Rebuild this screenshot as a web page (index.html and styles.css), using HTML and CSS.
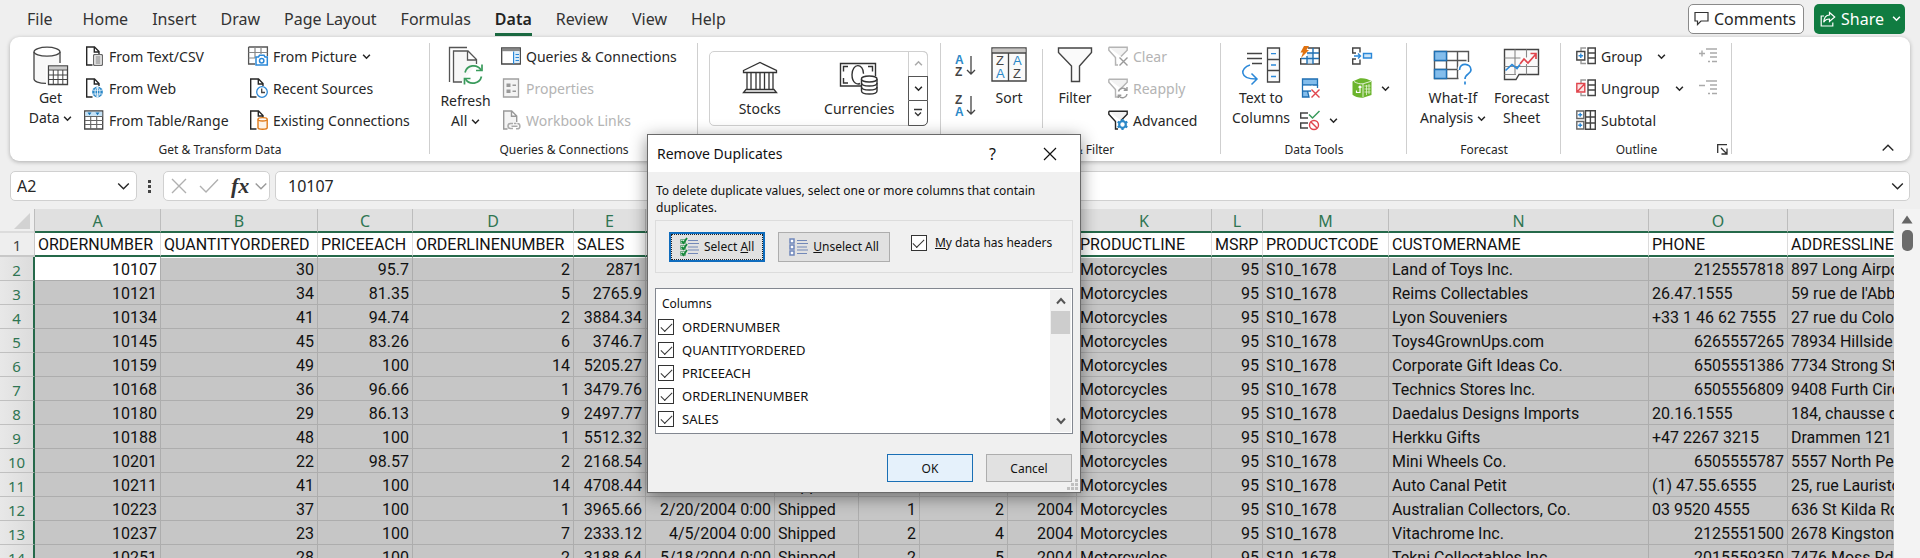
FILE: index.html
```html
<!DOCTYPE html>
<html lang="en">
<head>
<meta charset="utf-8">
<title>Remove Duplicates</title>
<link rel="stylesheet" href="styles.css">
</head>
<body>
<svg class="defs" aria-hidden="true">
  <symbol id="chev" viewBox="0 0 8 8"><path d="M1 2.5l3 3 3-3" fill="none" stroke="currentColor" stroke-width="1.4"/></symbol>
  <symbol id="chev-lg" viewBox="0 0 12 8"><path d="M.7 1.5L6 6.7l5.300-5.200" fill="none" stroke="currentColor" stroke-width="1.4"/></symbol>
  <symbol id="page" viewBox="0 0 20 20"><path d="M8.500 19H2.700V1h7.800l4.500 4.500V8M10.300 1v5H15" fill="none" stroke="currentColor" stroke-width="1.400"/></symbol>
  <symbol id="funnel" viewBox="0 0 20 20"><path d="M.8 1.200h18.400v3L13 10.500M.8 1.200v3l6.700 7.300V19H10" fill="#f2f2f2" stroke="currentColor" stroke-width="1.400"/></symbol>
</svg>

<header class="tabs">
  <nav class="tab-list">
    <a href="#file">File</a><a href="#home">Home</a><a href="#insert">Insert</a><a href="#draw">Draw</a><a href="#layout">Page Layout</a><a href="#formulas">Formulas</a><a href="#data" class="active">Data</a><a href="#review">Review</a><a href="#view">View</a><a href="#help">Help</a>
  </nav>
  <button class="comments"><svg width="15" height="15" viewBox="0 0 15 15"><path d="M1 1.500h13v8.500H7l-3.500 3.500V10H1z" fill="none" stroke="#333" stroke-width="1.200"/></svg>Comments</button>
  <button class="share"><svg width="16" height="16" viewBox="0 0 16 16" fill="none" stroke="#fff" stroke-width="1.200"><path d="M4 5H1.200v10h11.600v-3.500"/><path d="M9.500 1.500L14.700 6 9.500 10.500V8C6.500 8 5 9 3.700 11.200 4 7 6 4.200 9.500 4z"/></svg>Share<svg class="chev" width="9" height="9"><use href="#chev"/></svg></button>
</header>

<section class="ribbon">
  <div class="group g-get">
    <div class="body">
      <button class="big">
        <svg width="36" height="40" viewBox="0 0 36 40" fill="none" stroke="#444" stroke-width="1.300"><path d="M1.600 6v27c2 3 6 4 11.400 4V19h13V7z" fill="#f8f8f8" stroke="none"/><path d="M1 6v27c0 2.500 5 4.300 12 4.300M27 6v11" /><ellipse cx="14" cy="5.700" rx="13" ry="4.500" fill="#fff"/><path d="M15.500 20h19v18.500h-19z" fill="#fff"/><path d="M16 20.500h18v3H16z" fill="#ccc" stroke="none"/><path d="M15.500 24h19M15.500 29h19M15.500 33.500h19M20.300 24v14.500M25 24v14.500M29.800 24v14.500" stroke-width="1"/></svg>
        <span>Get</span><span>Data <svg class="chev" width="9" height="9"><use href="#chev"/></svg></span>
      </button>
      <div class="stack col-a">
        <button class="cmd"><svg width="20" height="20" viewBox="0 0 20 20"><use href="#page"/><path d="M9.700 8.700h8.600v10.600H9.700z" fill="#fff" stroke="#444"/><path d="M11.500 11h5M11.500 13h5M11.500 15h5M11.500 17h5" stroke="#666"/></svg>From Text/CSV</button>
        <button class="cmd"><svg width="20" height="20" viewBox="0 0 20 20"><use href="#page"/><circle cx="13.500" cy="14" r="5.400" fill="#2b88c8"/><path d="M8.500 12.200h10M8.500 16h10M13.500 8.700v10.600M13.500 8.700c-3.300 3.300-3.300 7.300 0 10.600 3.300-3.300 3.300-7.300 0-10.600" stroke="#fff" stroke-width=".8" fill="none"/></svg>From Web</button>
        <button class="cmd"><svg width="20" height="20" viewBox="0 0 20 20"><path d="M.7 1h18v18H.7z" fill="#fff" stroke="#444" stroke-width="1.300"/><path d="M1 6.500h18M1 10.500h18M1 14.500h18M6.700 6.500V19M12.700 6.500V19" stroke="#666" stroke-width="1.100"/><path d="M1.300 1.700h17v4.200h-17z" fill="#c5e2f6"/><path d="M3.500 2.500h4l-2 2.700zM11.500 2.500h4l-2 2.700z" fill="#1673b5"/></svg>From Table/Range</button>
      </div>
      <div class="stack">
        <button class="cmd"><svg width="20" height="20" viewBox="0 0 20 20"><path d="M.6 1h18.800v9M.6 1v17H7" fill="none" stroke="#555" stroke-width="1.300"/><path d="M.6 6.500h18.800M.6 12H7M7 1v11M13 1v7" stroke="#888" fill="none" stroke-width="1.200"/><path d="M8 11h2.500l1-1.700h4.500l1 1.700h2.300v8H8z" fill="#fff" stroke="#2b88d8" stroke-width="1.500"/><circle cx="13.700" cy="14.700" r="2.200" fill="#fff" stroke="#2b88d8" stroke-width="1.500"/></svg>From Picture<svg class="chev" width="9" height="9"><use href="#chev"/></svg></button>
        <button class="cmd"><svg width="20" height="20" viewBox="0 0 20 20"><use href="#page"/><circle cx="14" cy="14" r="5.300" fill="#fff" stroke="#2b88d8" stroke-width="1.300"/><path d="M13.700 10.500v4H17" stroke="#444" fill="none" stroke-width="1.300"/></svg>Recent Sources</button>
        <button class="cmd"><svg width="20" height="20" viewBox="0 0 20 20"><use href="#page"/><path d="M10 9.500v8.300c0 2 9.200 2 9.200 0V9.500" fill="#fdf3e7" stroke="#e07b1a" stroke-width="1.400"/><ellipse cx="14.600" cy="9.300" rx="4.600" ry="1.700" fill="#fff" stroke="#e07b1a" stroke-width="1.400"/></svg>Existing Connections</button>
      </div>
    </div>
    <div class="caption">Get &amp; Transform Data</div>
  </div>

  <div class="group g-query">
    <div class="body">
      <button class="big low">
        <svg width="36" height="40" viewBox="0 0 36 40" fill="none" stroke="#555" stroke-width="1.300"><path d="M1.500 36V1.500H19"/><path d="M14 36H5.500V5H20l8.500 8.500V18M19.500 5v9h9" fill="#f7f7f7"/><path d="M17 26.500a8.800 8.800 0 0 1 16-2.500M33.500 30.500a8.800 8.800 0 0 1-16 2.500" stroke="#3a9b5c" stroke-width="1.700"/><path d="M34 18.500v6h-6M16.500 38.500v-6h6" stroke="#3a9b5c" stroke-width="1.700"/></svg>
        <span>Refresh</span><span>All <svg class="chev" width="9" height="9"><use href="#chev"/></svg></span>
      </button>
      <div class="stack">
        <button class="cmd"><svg width="20" height="20" viewBox="0 0 20 20"><path d="M.7 2h18.600v16H.7z" fill="#fff" stroke="#444" stroke-width="1.300"/><path d="M1 2.500h18v2.700H1z" fill="#888"/><path d="M12.700 5.500V18" stroke="#2b88d8" stroke-width="1.400"/><path d="M13.500 5.500h5V17h-5z" fill="#d9ecfa"/><path d="M14.500 8.500h3.500M14.500 11.500h3.500M14.500 14.500h3.500" stroke="#2b88d8"/></svg>Queries &amp; Connections</button>
        <button class="cmd" disabled><svg width="20" height="20" viewBox="0 0 20 20"><path d="M2.500 1h15v18h-15z" fill="#f4f4f4" stroke="#a0a0a0" stroke-width="1.300"/><path d="M5.500 5.500h4v3.500h-4zM5.500 11.500h4V15h-4z" fill="#999"/><path d="M11.500 7.300h3.500M11.500 13.300h3.500" stroke="#999" stroke-width="1.500"/></svg>Properties</button>
        <button class="cmd" disabled><svg width="20" height="20" viewBox="0 0 20 20"><path d="M6.500 19H2.700V1h8l5 5v6M10.500 1v5.300h5" fill="#f4f4f4" stroke="#999" stroke-width="1.400"/><path d="M12 18.500H9.500a2.500 2.500 0 0 1 0-5H12M13 13.500h2.500M15 18.800h1.300a2.600 2.600 0 0 0 0-5.200M10.500 16.200h6" fill="none" stroke="#aaa" stroke-width="1.500"/></svg>Workbook Links</button>
      </div>
    </div>
    <div class="caption">Queries &amp; Connections</div>
  </div>

  <div class="group g-types">
    <div class="gallery">
      <button class="tile"><svg width="36" height="34" viewBox="0 0 36 34" fill="none" stroke="#333" stroke-width="1.300"><path d="M1.500 9.500L18 1.500l16.500 8v2h-33zM4 28.500h28l2.500 3h-33zM5 11.500v17M9 11.500v17M14 11.500v17M18 11.500v17M22.500 11.500v17M27 11.500v17M31 11.500v17"/></svg>Stocks</button>
      <button class="tile"><svg width="40" height="34" viewBox="0 0 40 34" fill="none" stroke="#333" stroke-width="1.400"><path d="M22 25H1.500V2.500h35V15"/><path d="M9 5.500H4.500v5M4.500 17v5H9M29 5.500h4.500v5"/><path d="M21 22.500c-2 1-8 .5-8-8.700 0-12 11.500-12 11.500-1"/><path d="M22.500 18v12c0 4 15.500 4 15.500 0V18" fill="#fff"/><ellipse cx="30.200" cy="18" rx="7.800" ry="3" fill="#fff"/><path d="M22.500 22c0 4 15.500 4 15.500 0M22.500 26c0 4 15.500 4 15.500 0"/></svg>Currencies</button>
      <div class="spin">
        <button class="dim" aria-label="Scroll up"><svg class="flip" width="9" height="9"><use href="#chev"/></svg></button>
        <button aria-label="Scroll down"><svg width="9" height="9"><use href="#chev"/></svg></button>
        <button aria-label="More"><svg width="10" height="10" viewBox="0 0 10 10" fill="none" stroke="#333" stroke-width="1.300"><path d="M1 1.500h8M2 4.500l3 3 3-3"/></svg></button>
      </div>
    </div>
  </div>

  <div class="group g-sort">
    <div class="body">
      <div class="sorts">
        <button aria-label="Sort A to Z"><svg width="22" height="24" viewBox="0 0 22 24"><text x="0" y="10" class="lt blue">A</text><text x="0" y="22" class="lt">Z</text><path d="M16 2v18M12 16l4 4 4-4" fill="none" stroke="#444" stroke-width="1.300"/></svg></button>
        <button aria-label="Sort Z to A"><svg width="22" height="24" viewBox="0 0 22 24"><text x="0" y="10" class="lt">Z</text><text x="0" y="22" class="lt blue">A</text><path d="M16 2v18M12 16l4 4 4-4" fill="none" stroke="#444" stroke-width="1.300"/></svg></button>
      </div>
      <button class="big sort">
        <svg width="36" height="40" viewBox="0 0 36 40"><path d="M1 2h34v33H1z" fill="#fafafa" stroke="#444" stroke-width="1.400"/><path d="M1.500 2.500h33v4h-33z" fill="#c8c6c4"/><path d="M1 7h34M17.500 7v28" stroke="#444" stroke-width="1.300"/><text x="5" y="19" class="lt thin">Z</text><text x="5" y="32" class="lt thin blue">A</text><text x="22" y="19" class="lt thin blue">A</text><text x="22" y="32" class="lt thin">Z</text></svg>
        <span>Sort</span>
      </button>
      <button class="big filter">
        <svg width="36" height="40" viewBox="0 0 36 40"><path d="M1.500 2h33v4.500L22.500 20v15.500h-8V20L1.500 6.500z" fill="#fafafa" stroke="#444" stroke-width="1.400"/></svg>
        <span>Filter</span>
      </button>
      <div class="stack">
        <button class="cmd" disabled><svg width="20" height="20" viewBox="0 0 20 20"><use href="#funnel"/><path d="M11.500 11.500l8 8M19.500 11.500l-8 8" stroke="#999" stroke-width="1.400"/></svg>Clear</button>
        <button class="cmd" disabled><svg width="20" height="20" viewBox="0 0 20 20"><use href="#funnel"/><path d="M10.500 13.500a4.500 4.500 0 0 1 8-1.500M19 16a4.500 4.500 0 0 1-8 2M19 9v3.300h-3.300M10.300 20v-2.700h3" fill="none" stroke="#999" stroke-width="1.400"/></svg>Reapply</button>
        <button class="cmd"><svg width="20" height="20" viewBox="0 0 20 20"><use href="#funnel"/><circle cx="14.500" cy="14.500" r="3.300" fill="#fff" stroke="#2b88c8" stroke-width="2.200"/><path d="M14.500 9v2M14.500 18v2M9.700 11.700l1.800 1M17.500 16.300l1.800 1M9.700 17.300l1.800-1M17.500 12.700l1.800-1" stroke="#2b88c8" stroke-width="2.200"/></svg>Advanced</button>
      </div>
    </div>
    <div class="caption">Sort &amp; Filter</div>
  </div>

  <div class="group g-tools">
    <div class="body">
      <button class="big">
        <svg width="40" height="40" viewBox="0 0 40 40" fill="none" stroke="#444" stroke-width="1.300"><path d="M6 7.500h15M6 12.500h15M11 17.500h10"/><path d="M9 19c-10 3-11 14 6 14M10.500 27.500l5.500 5.500-5.500 5.500" stroke="#2b88d8" stroke-width="1.500"/><path d="M26.500 2h12v34h-12zM26.500 13.500h12M26.500 24.500h12" fill="#fafafa"/><path d="M30 7.700h5M30 19h5M30 30.500h5" stroke="#2b88d8"/></svg>
        <span>Text to</span><span>Columns</span>
      </button>
      <div class="stack tools">
        <button class="cmd" aria-label="Flash Fill"><svg width="20" height="20" viewBox="0 0 20 20"><path d="M8 2h11.300v16H.7v-6" fill="#fff" stroke="#444" stroke-width="1.400"/><path d="M7 6.500h6v11H7z" fill="#cfe6f8"/><path d="M7 7h12M1 12.500h18M7 10v8M13 2v16" stroke="#1f6fb2" stroke-width="1.400"/><path d="M4 0h5L6.500 4H9L1 12l2-5.500H.5z" fill="#e0720f"/></svg></button>
        <button class="cmd" aria-label="Remove Duplicates"><svg width="20" height="20" viewBox="0 0 20 20"><path d="M2.500 1h15v6h-15zM2.500 7h8v6h-8zM2.500 13h5l1.500 6H2.500z" fill="#83bdec" stroke="#1f6fb2" stroke-width="1.300"/><path d="M3.200 7.700H13v4.600H3.200z" fill="#fff"/><path d="M17.500 7v3" stroke="#1f6fb2" stroke-width="1.300"/><path d="M11.500 11.500l8 8M19.500 11.500l-8 8" stroke="#e0454d" stroke-width="1.400"/></svg></button>
        <button class="cmd" aria-label="Data Validation"><svg width="20" height="20" viewBox="0 0 20 20" fill="none" stroke="#444" stroke-width="1.400"><path d="M8 3H.7v5H8M8 13H.7v5H8"/><path d="M9 4.500l3.500 3.500L19.500 1" stroke="#3a9b5c" stroke-width="1.500"/><circle cx="14" cy="15" r="4.500" stroke="#e0454d"/><path d="M11 12l6 6" stroke="#e0454d"/></svg><svg class="chev" width="9" height="9"><use href="#chev"/></svg></button>
      </div>
      <div class="stack">
        <button class="cmd" aria-label="Consolidate"><svg width="20" height="20" viewBox="0 0 20 20" fill="none" stroke="#444" stroke-width="1.400"><path d="M8 6.500V2H.7v5H4M8 13.500V18H.7v-5H4"/><path d="M2 10h6M6 7.500L8.500 10 6 12.500" stroke="#2b88d8"/><path d="M11.500 7.500h8v4.500h-8z" fill="#cfe6f8" stroke="#2b88d8"/></svg></button>
        <button class="cmd" aria-label="Data Model"><svg width="20" height="20" viewBox="0 0 20 20"><path d="M.5 3.500L8 .3c4-.5 8 .7 11.500 2.700v14L11 19.800c-4 .3-8-1-10.500-3z" fill="#6cb52d"/><path d="M2 3.500c3 2 6 2.500 9 2.300l8-2.500M11 6v13" stroke="#fff" stroke-width=".8" fill="none"/><path d="M12.500 8h6M12.500 11h6M12.500 14h6M14.500 7v10M17 6v10" stroke="#e3f4d3" stroke-width=".8"/><path d="M8 9v5.500H4.500v-2M6.500 9.500L8 8l1.500 1.500" stroke="#fff" fill="none" stroke-width="1.200"/></svg><svg class="chev" width="9" height="9"><use href="#chev"/></svg></button>
      </div>
    </div>
    <div class="caption">Data Tools</div>
  </div>

  <div class="group g-forecast">
    <div class="body">
      <button class="big">
        <svg width="40" height="40" viewBox="0 0 40 40" fill="none" stroke="#555" stroke-width="1.400"><path d="M1.500 5.500h34v27h-34z" fill="#fff" stroke="none"/><path d="M35.500 16V5.500h-34v27h24M13.500 5.500v27M24.500 5.500v27M1.500 14.500h32M1.500 23.500H26"/><path d="M1.500 5.500h12v9h-12zM1.500 23.500h12v9h-12z" fill="#83bdec" stroke="#1f6fb2"/><path d="M26.500 24c0-8 11.500-7 11.500 0 0 4-6 4-6 9M32 35.500v3" stroke="#fff" stroke-width="4"/><path d="M26.500 24c0-8 11.500-7 11.500 0 0 4-6 4-6 9M32 35.500v3" stroke="#2b88d8" stroke-width="1.700"/></svg>
        <span>What-If</span><span>Analysis <svg class="chev" width="9" height="9"><use href="#chev"/></svg></span>
      </button>
      <button class="big">
        <svg width="40" height="40" viewBox="0 0 40 40" fill="none" stroke="#444" stroke-width="1.400"><path d="M2.500 33.500V3.500h34v25H17l-3 5z" fill="#fafafa"/><path d="M2.500 12h16M2.500 20.500h34M13 3.500v25M24.500 3.500v8M24.500 18v10.500M2.500 28.500H14" stroke="#888" stroke-width="1.100"/><path d="M3.500 24.500l6.500-6 5 4 3-4" stroke="#2b88d8" stroke-width="1.700"/><path d="M18 18l4-5 4 4 7.500-8.500M28.500 7.500h5.500V13" stroke="#e0454d" stroke-width="1.700"/></svg>
        <span>Forecast</span><span>Sheet</span>
      </button>
    </div>
    <div class="caption">Forecast</div>
  </div>

  <div class="group g-outline">
    <div class="body">
      <div class="stack">
        <button class="cmd"><svg width="20" height="20" viewBox="0 0 20 20" fill="none" stroke="#444" stroke-width="1.400"><path d="M12 2h7.300v15.500H12zM12 7h7M12 12h7" /><path d="M10 2H5v3M10 17.500H5V15" stroke="#999"/><path d="M.8 5.500h8v8.500h-8z"/><path d="M2.500 9.700h4.600M4.800 7.400V12" stroke="#2b88d8"/></svg>Group<svg class="chev wide" width="9" height="9"><use href="#chev"/></svg></button>
        <button class="cmd"><svg width="20" height="20" viewBox="0 0 20 20" fill="none" stroke="#444" stroke-width="1.400"><path d="M12 2h7.300v15.500H12zM12 7h7M12 12h7" /><path d="M10 2H5v3M10 17.500H5V15" stroke="#999"/><path d="M.8 5.500h8v8.500h-8zM1 14l8-8.500" stroke="#e0454d" fill="#fbe3e4"/></svg>Ungroup<svg class="chev wide" width="9" height="9"><use href="#chev"/></svg></button>
        <button class="cmd"><svg width="20" height="20" viewBox="0 0 20 20" fill="none" stroke="#444" stroke-width="1.400"><path d="M9.500.8h9.800v18.500H9.500zM9.500 7h10M9.500 13h10M14.400 1v18" /><path d="M.8 1h7v7.500h-7zM.8 11.500h7v7.500h-7z" stroke="#666"/><path d="M2.200 4.700h4M4.200 2.700v4M2.200 15.200h4M4.200 13.200v4" stroke="#2b88d8"/></svg>Subtotal</button>
      </div>
      <div class="stack levels">
        <button class="cmd" aria-label="Show Detail"><svg width="20" height="20" viewBox="0 0 20 20" stroke="#aaa" stroke-width="1.400"><path d="M1 7.500h6M4 4.500v6M8 3h11M12 7h7M12 11h7M14 15.500h5M10 15.500h2"/></svg></button>
        <button class="cmd" aria-label="Hide Detail"><svg width="20" height="20" viewBox="0 0 20 20" stroke="#aaa" stroke-width="1.400"><path d="M1 7.500h6M8 3h11M12 7h7M12 11h7M14 15.500h5M10 15.500h2"/></svg></button>
      </div>
    </div>
    <div class="caption">Outline<button class="launcher" aria-label="Outline settings"><svg width="11" height="11" viewBox="0 0 11 11" fill="none" stroke="#333" stroke-width="1.300"><path d="M.7 9V.7H10M4 4l5.500 5.500M10 4.500V10H4.500"/></svg></button></div>
  </div>
  <button class="collapse" aria-label="Collapse the ribbon"><svg class="flip" width="12" height="8"><use href="#chev-lg"/></svg></button>
</section>

<section class="formula">
  <div class="box name"><input aria-label="Name box" value="A2"><svg width="13" height="8"><use href="#chev-lg"/></svg></div>
  <span class="dots"><i></i><i></i><i></i></span>
  <div class="box fx">
    <svg width="16" height="16" viewBox="0 0 16 16"><path d="M1 1l14 14M15 1L1 15" stroke="#b0b0b0" stroke-width="1.400"/></svg>
    <svg width="20" height="16" viewBox="0 0 20 16"><path d="M1 8l6 6L19 1.500" fill="none" stroke="#b0b0b0" stroke-width="1.400"/></svg>
    <em>fx</em>
    <svg class="dim" width="12" height="8"><use href="#chev-lg"/></svg>
  </div>
  <div class="box bar"><input aria-label="Formula bar" value="10107"><svg width="13" height="8"><use href="#chev-lg"/></svg></div>
</section>

<main class="sheet">
  <div class="grid">
  <table>
    <colgroup><col class="w-r"><col class="w-a"><col class="w-b"><col class="w-c"><col class="w-d"><col class="w-e"><col class="w-f"><col class="w-g"><col class="w-h"><col class="w-i"><col class="w-j"><col class="w-k"><col class="w-l"><col class="w-m"><col class="w-n"><col class="w-o"><col></colgroup>
    <thead><tr><th class="corner"><svg width="16" height="16" viewBox="0 0 16 16"><path d="M16 0v16H0z" fill="#d2d2d2"/></svg></th><th>A</th><th>B</th><th>C</th><th>D</th><th>E</th><th></th><th></th><th></th><th></th><th></th><th>K</th><th>L</th><th>M</th><th>N</th><th>O</th><th></th></tr></thead>
    <tbody>
    <tr class="names"><th>1</th><td>ORDERNUMBER</td><td>QUANTITYORDERED</td><td>PRICEEACH</td><td>ORDERLINENUMBER</td><td>SALES</td><td></td><td></td><td></td><td></td><td></td><td>PRODUCTLINE</td><td>MSRP</td><td>PRODUCTCODE</td><td>CUSTOMERNAME</td><td>PHONE</td><td>ADDRESSLINE</td></tr>
    <tr class="first"><th>2</th><td class="n active-cell">10107</td><td class="n">30</td><td class="n">95.7</td><td class="n">2</td><td class="n">2871</td><td></td><td></td><td></td><td></td><td></td><td>Motorcycles</td><td class="n">95</td><td>S10_1678</td><td>Land of Toys Inc.</td><td class="n">2125557818</td><td>897 Long Airport</td></tr>
    <tr><th>3</th><td class="n">10121</td><td class="n">34</td><td class="n">81.35</td><td class="n">5</td><td class="n">2765.9</td><td></td><td></td><td></td><td></td><td></td><td>Motorcycles</td><td class="n">95</td><td>S10_1678</td><td>Reims Collectables</td><td>26.47.1555</td><td>59 rue de l'Abbaye</td></tr>
    <tr><th>4</th><td class="n">10134</td><td class="n">41</td><td class="n">94.74</td><td class="n">2</td><td class="n">3884.34</td><td></td><td></td><td></td><td></td><td></td><td>Motorcycles</td><td class="n">95</td><td>S10_1678</td><td>Lyon Souveniers</td><td>+33 1 46 62 7555</td><td>27 rue du Colonel</td></tr>
    <tr><th>5</th><td class="n">10145</td><td class="n">45</td><td class="n">83.26</td><td class="n">6</td><td class="n">3746.7</td><td></td><td></td><td></td><td></td><td></td><td>Motorcycles</td><td class="n">95</td><td>S10_1678</td><td>Toys4GrownUps.com</td><td class="n">6265557265</td><td>78934 Hillside</td></tr>
    <tr><th>6</th><td class="n">10159</td><td class="n">49</td><td class="n">100</td><td class="n">14</td><td class="n">5205.27</td><td></td><td></td><td></td><td></td><td></td><td>Motorcycles</td><td class="n">95</td><td>S10_1678</td><td>Corporate Gift Ideas Co.</td><td class="n">6505551386</td><td>7734 Strong St.</td></tr>
    <tr><th>7</th><td class="n">10168</td><td class="n">36</td><td class="n">96.66</td><td class="n">1</td><td class="n">3479.76</td><td></td><td></td><td></td><td></td><td></td><td>Motorcycles</td><td class="n">95</td><td>S10_1678</td><td>Technics Stores Inc.</td><td class="n">6505556809</td><td>9408 Furth Circle</td></tr>
    <tr><th>8</th><td class="n">10180</td><td class="n">29</td><td class="n">86.13</td><td class="n">9</td><td class="n">2497.77</td><td></td><td></td><td></td><td></td><td></td><td>Motorcycles</td><td class="n">95</td><td>S10_1678</td><td>Daedalus Designs Imports</td><td>20.16.1555</td><td>184, chausse de</td></tr>
    <tr><th>9</th><td class="n">10188</td><td class="n">48</td><td class="n">100</td><td class="n">1</td><td class="n">5512.32</td><td></td><td></td><td></td><td></td><td></td><td>Motorcycles</td><td class="n">95</td><td>S10_1678</td><td>Herkku Gifts</td><td>+47 2267 3215</td><td>Drammen 121</td></tr>
    <tr><th>10</th><td class="n">10201</td><td class="n">22</td><td class="n">98.57</td><td class="n">2</td><td class="n">2168.54</td><td></td><td></td><td></td><td></td><td></td><td>Motorcycles</td><td class="n">95</td><td>S10_1678</td><td>Mini Wheels Co.</td><td class="n">6505555787</td><td>5557 North Pe</td></tr>
    <tr><th>11</th><td class="n">10211</td><td class="n">41</td><td class="n">100</td><td class="n">14</td><td class="n">4708.44</td><td></td><td>Shipped</td><td></td><td></td><td></td><td>Motorcycles</td><td class="n">95</td><td>S10_1678</td><td>Auto Canal Petit</td><td>(1) 47.55.6555</td><td>25, rue Lauriston</td></tr>
    <tr><th>12</th><td class="n">10223</td><td class="n">37</td><td class="n">100</td><td class="n">1</td><td class="n">3965.66</td><td class="n">2/20/2004 0:00</td><td>Shipped</td><td class="n">1</td><td class="n">2</td><td class="n">2004</td><td>Motorcycles</td><td class="n">95</td><td>S10_1678</td><td>Australian Collectors, Co.</td><td>03 9520 4555</td><td>636 St Kilda Road</td></tr>
    <tr><th>13</th><td class="n">10237</td><td class="n">23</td><td class="n">100</td><td class="n">7</td><td class="n">2333.12</td><td class="n">4/5/2004 0:00</td><td>Shipped</td><td class="n">2</td><td class="n">4</td><td class="n">2004</td><td>Motorcycles</td><td class="n">95</td><td>S10_1678</td><td>Vitachrome Inc.</td><td class="n">2125551500</td><td>2678 Kingston</td></tr>
    <tr><th>14</th><td class="n">10251</td><td class="n">28</td><td class="n">100</td><td class="n">2</td><td class="n">3188.64</td><td class="n">5/18/2004 0:00</td><td>Shipped</td><td class="n">2</td><td class="n">5</td><td class="n">2004</td><td>Motorcycles</td><td class="n">95</td><td>S10_1678</td><td>Tekni Collectables Inc.</td><td class="n">2015559350</td><td>7476 Moss Rd.</td></tr>
    </tbody>
  </table>
  </div>
  <div class="vscroll"><svg width="12" height="9" viewBox="0 0 12 9"><path d="M6 .5L11.500 8.500H.5z" fill="#666"/></svg><i></i></div>
</main>

<div class="dialog" role="dialog" aria-labelledby="dlg-title">
  <div class="titlebar">
    <h1 id="dlg-title">Remove Duplicates</h1>
    <button aria-label="Help">?</button>
    <button aria-label="Close"><svg width="14" height="14" viewBox="0 0 14 14"><path d="M1 1l12 12M13 1L1 13" stroke="#111" stroke-width="1.200"/></svg></button>
  </div>
  <p>To delete duplicate values, select one or more columns that contain duplicates.</p>
  <div class="options">
    <button class="btn focus"><svg width="20" height="20" viewBox="0 0 20 20"><path d="M8 3.500h10M8 6.500h11M8 10h10M8 13h11M8 16.500h10" stroke="#7288b8" stroke-width="1.200"/><path d="M.5 2.500h5v4h-5zM.5 8.500h5v4h-5zM.5 14.500h5v4h-5z" fill="#dcefe2" stroke="#78a98a"/><path d="M1.500 4l2 2L7 1M1.500 10l2 2L7 7M1.500 16l2 2L7 13" fill="none" stroke="#15883a" stroke-width="1.800"/></svg><span>Select <u>A</u>ll</span></button>
    <button class="btn"><svg width="20" height="20" viewBox="0 0 20 20"><path d="M8 3.500h10M8 6.500h11M8 10h10M8 13h11M8 16.500h10" stroke="#7288b8" stroke-width="1.200"/><path d="M1 2h4v4H1zM1 8h4v4H1zM1 14h4v4H1z" fill="#fff" stroke="#6f86bb" stroke-width="1.500"/></svg><span><u>U</u>nselect All</span></button>
    <label class="check"><input type="checkbox" checked><span><u>M</u>y data has headers</span></label>
  </div>
  <div class="list">
    <div class="items">
      <div class="head">Columns</div>
      <label class="check"><input type="checkbox" checked>ORDERNUMBER</label>
      <label class="check"><input type="checkbox" checked>QUANTITYORDERED</label>
      <label class="check"><input type="checkbox" checked>PRICEEACH</label>
      <label class="check"><input type="checkbox" checked>ORDERLINENUMBER</label>
      <label class="check"><input type="checkbox" checked>SALES</label>
    </div>
    <div class="scroll"><svg width="10" height="8" viewBox="0 0 10 8"><path d="M1 6.500l4-4.500 4 4.500" fill="none" stroke="#555" stroke-width="2"/></svg><i></i><svg width="10" height="8" viewBox="0 0 10 8"><path d="M1 1.500L5 6l4-4.500" fill="none" stroke="#555" stroke-width="2"/></svg></div>
  </div>
  <div class="actions"><button class="btn ok">OK</button><button class="btn">Cancel</button></div>
  <svg class="grip" width="12" height="12" viewBox="0 0 12 12"><path d="M8 0h3v3H8zM4 4h3v3H4zM8 4h3v3H8zM0 8h3v3H0zM4 8h3v3H4zM8 8h3v3H8z" fill="#c0c0c0"/></svg>
</div>
</body>
</html>
```
FILE: styles.css
```css
* { box-sizing: border-box; }
body {
  margin: 0;
  height: 100vh;
  display: flex;
  flex-direction: column;
  overflow: hidden;
  position: relative;
  background: #efefef;
  color: #262626;
  font-family: "Noto Sans", "Open Sans", sans-serif;
  font-size: 14px;
}
button, input { font: inherit; color: inherit; }
button { border: 0; background: none; padding: 0; margin: 0; }
svg { display: block; flex: none; overflow: visible; }
.defs { position: absolute; width: 0; height: 0; }
.flip { transform: rotate(180deg); }

/* tabs */
.tabs { display: flex; align-items: center; height: 37px; padding: 0 15px 0 27px; font-size: 16px; }
.tab-list { display: flex; gap: 24px; flex: 1; }
.tab-list a { color: #333; text-decoration: none; line-height: 28px; padding-top: 4px; border-bottom: 3px solid transparent; }
.tab-list a:first-child { margin-right: 6px; }
.tab-list .active { font-weight: 600; color: #222; border-color: #1b6b42; }
.comments, .share { display: flex; align-items: center; gap: 5px; height: 30px; border-radius: 5px; }
.comments { background: #fff; border: 1px solid #8a8a8a; padding: 0 7px 0 5px; margin-right: 10px; }
.share { background: #107c41; color: #fff; padding: 0 4px 0 6px; }
.share .chev { margin-left: 3px; }

/* ribbon */
.ribbon {
  display: grid;
  grid-template-columns: 420px 268px 243px 280px 186px 154px 171px 1fr;
  margin: 0 10px;
  background: #fff;
  border-radius: 9px;
  box-shadow: 0 1px 4px rgba(0, 0, 0, .28);
}
.group { position: relative; padding-top: 3px; }
.group::after { content: ""; position: absolute; right: 0; top: 6px; bottom: 7px; width: 1px; background: #cfcfcf; }
.body { display: flex; height: 98px; }
.caption { display: flex; justify-content: center; font-size: 12px; line-height: 23px; color: #262626; }
.big { display: flex; flex-direction: column; align-items: center; padding-top: 6px; line-height: 20px; }
.big > svg { margin-bottom: 2px; }
.big.low > svg { margin-bottom: 5px; }
.big span { white-space: nowrap; }
.big .chev { display: inline-block; }
.cmd { display: flex; align-items: center; gap: 5px; height: 32px; white-space: nowrap; }
.cmd:disabled { color: #b4b4b4; }
.cmd .wide { margin-left: 10px; }
.g-get .body { padding-left: 14px; gap: 7px; }
.g-get .big { width: 53px; }
.col-a { width: 157px; }
.g-query .body { padding-left: 10px; gap: 10px; }
.g-query .big { width: 51px; }
.g-types { padding: 14px 13px 0 11px; }
.gallery { display: flex; height: 75px; border: 1px solid #d0d0d0; border-radius: 5px; }
.tile { flex: 1; display: flex; flex-direction: column; align-items: center; justify-content: flex-end; gap: 4px; line-height: 20px; padding-bottom: 6px; }
.spin { display: flex; flex-direction: column; width: 20px; margin: -1px; }
.spin button { flex: 1; display: grid; place-items: center; border: 1px solid #555; }
.spin .dim { border: 1px solid #d0d0d0; border-bottom: 0; border-radius: 0 5px 0 0; color: #aaa; }
.spin button:last-child { border-radius: 0 0 5px 0; }
.spin button:nth-child(2) { border-bottom: 0; }
.g-sort .body { padding-left: 14px; }
.sorts { display: flex; flex-direction: column; gap: 16px; padding-top: 14px; width: 36px; }
.lt { font: 600 12px "Liberation Sans", sans-serif; fill: #444; }
.lt.thin { font-weight: 400; font-size: 13px; }
.lt.blue { fill: #2b88c8; }
.sort { width: 36px; }
.filter { width: 66px; margin-left: 15px; position: relative; }
.filter::before { content: ""; position: absolute; left: 0; top: 9px; bottom: 10px; width: 1px; background: #cfcfcf; }
.g-tools .body { padding-left: 11px; }
.g-tools .big { width: 58px; }
.tools { width: 52px; margin-left: 10px; }
.g-tools .chev { margin-left: 4px; }
.g-forecast .body { padding-left: 13px; gap: 8px; }
.g-outline .body { padding-left: 15px; justify-content: space-between; padding-right: 14px; }
.g-outline .caption { padding-right: 20px; }
.launcher { position: absolute; right: 4px; bottom: 6px; }
.collapse { align-self: end; justify-self: end; margin: 0 16px 9px 0; }

/* formula bar */
.formula { display: flex; margin: 10px 10px 8px; height: 30px; font-size: 16px; }
.box { display: flex; align-items: center; background: #fff; border: 1px solid #d0d0d0; border-radius: 5px; }
.box input { border: 0; background: none; outline: 0; min-width: 0; flex: 1; padding: 0; }
.name { width: 127px; padding: 0 6px; }
.dots { display: flex; flex-direction: column; justify-content: center; gap: 2px; padding: 0 12px 0 11px; }
.dots i { width: 3px; height: 3px; background: #444; }
.fx { width: 107px; padding: 0 2px 0 7px; gap: 12px; margin-right: 5px; }
.fx em { font: italic bold 22px "Liberation Serif", serif; color: #333; line-height: 24px; flex: 1; }
.fx .dim { color: #999; margin-left: -6px; }
.bar { flex: 1; padding: 0 5px 0 12px; }

/* sheet */
.sheet { display: flex; flex: 1; min-height: 0; }
.grid { flex: 1; min-width: 0; overflow: hidden; }
table { table-layout: fixed; width: 100%; border-collapse: separate; border-spacing: 0; }
.w-r { width: 35px; } .w-a { width: 126px; } .w-b { width: 157px; } .w-c { width: 95px; }
.w-d { width: 161px; } .w-e { width: 72px; } .w-f { width: 129px; } .w-g { width: 84px; }
.w-h { width: 61px; } .w-i { width: 88px; } .w-j { width: 69px; } .w-k { width: 135px; }
.w-l { width: 51px; } .w-m { width: 126px; } .w-n { width: 260px; } .w-o { width: 139px; }
th { font-weight: 400; color: #2f7552; padding: 2px 0 0; height: 24px; line-height: 20px; font-size: 16px; }
thead th { background: #e0e0e0; border-right: 1px solid #bdbdbd; border-bottom: 2px solid #25694a; }
thead .corner { background: #efefef; border-bottom-color: #dcdcdc; }
.corner svg { margin-left: 14px; }
tbody th { font-size: 15px; background: linear-gradient(90deg, #e8e8e8, #dcdcdc); border-right: 2px solid #25694a; border-bottom: 1px solid #c0c0c0; }
.names th { color: #444; background: #eeeeee; border-right: 1px solid #c8c8c8; border-bottom: 2px solid #c8c8c8; }
td {
  font-family: Roboto, "Liberation Sans", sans-serif;
  font-size: 16px;
  line-height: 21px;
  color: #111;
  height: 24px;
  padding: 2px 3px 0;
  overflow: hidden;
  white-space: nowrap;
  background: #c6c6c6;
  border-right: 1px solid #adadad;
  border-bottom: 1px solid #adadad;
}
.names td { line-height: 20px; background: #fff; border-right-color: #dcdcdc; border-bottom: 2px solid #25694a; }
.first td { box-shadow: inset 0 1px #fff; }
.n { text-align: right; }
.active-cell { background: #fff; }
td:last-child { border-right: 0; }
.vscroll { width: 26px; padding-top: 6px; background: #f3f3f3; display: flex; flex-direction: column; align-items: center; gap: 6px; }
.vscroll i { width: 11px; height: 21px; border-radius: 5px; background: #6b6b6b; }

/* dialog */
.dialog {
  position: absolute;
  left: 647px;
  top: 134px;
  width: 434px;
  background: #f0f0f0;
  border: 1px solid #6a6a6a;
  box-shadow: 0 4px 16px rgba(0, 0, 0, .45);
  color: #111;
  font-size: 12px;
  padding-bottom: 10px;
}
.titlebar { display: flex; align-items: center; height: 37px; background: #fff; padding-left: 9px; }
.titlebar h1 { flex: 1; margin: 0; font-size: 14px; font-weight: 400; }
.titlebar button { width: 57px; display: grid; place-items: center; font-size: 16px; }
.titlebar button:last-child { margin-right: 2px; }
.dialog p { margin: 10px 8px 4px; line-height: 17px; }
.options { display: flex; align-items: center; gap: 13px; margin: 0 7px; height: 53px; border: 1px solid #dcdcdc; padding-left: 13px; }
.btn { display: flex; align-items: center; justify-content: center; gap: 4px; background: #e1e1e1; border: 1px solid #adadad; height: 30px; padding: 0 10px; }
.focus { border: 2px solid #0f6cbd; outline: 1px dotted #222; outline-offset: -3px; padding: 0 9px; }
.check { display: flex; align-items: center; gap: 8px; }
.options .check { margin: 0 0 8px 8px; }
.check input {
  appearance: none;
  width: 16px;
  height: 16px;
  margin: 0;
  border: 1px solid #333;
  background: #fff;
  display: grid;
  place-items: center;
}
.check input:checked::before { content: ""; width: 10px; height: 5px; border: solid #333; border-width: 0 0 1px 1px; transform: translateY(-1px) rotate(-45deg); }
.list { display: flex; margin: 15px 7px 0; height: 146px; border: 1px solid #828790; background: #fff; padding: 1px; }
.items { flex: 1; padding: 4px 0 0 1px; }
.items .head { line-height: 20px; padding-left: 4px; margin-bottom: 1px; }
.items .check { height: 23px; font-size: 13px; }
.scroll { width: 21px; background: #f0f0f0; display: flex; flex-direction: column; align-items: center; padding: 7px 0; }
.scroll i { width: 19px; height: 23px; background: #cdcdcd; margin: 6px 0 auto; }
.actions { display: flex; justify-content: flex-end; gap: 13px; margin: 20px 8px 0; }
.actions .btn { width: 86px; height: 28px; }
.actions .ok { background: #e5f1fb; border-color: #1a6fb5; }
.grip { position: absolute; right: 1px; bottom: 1px; }
```
